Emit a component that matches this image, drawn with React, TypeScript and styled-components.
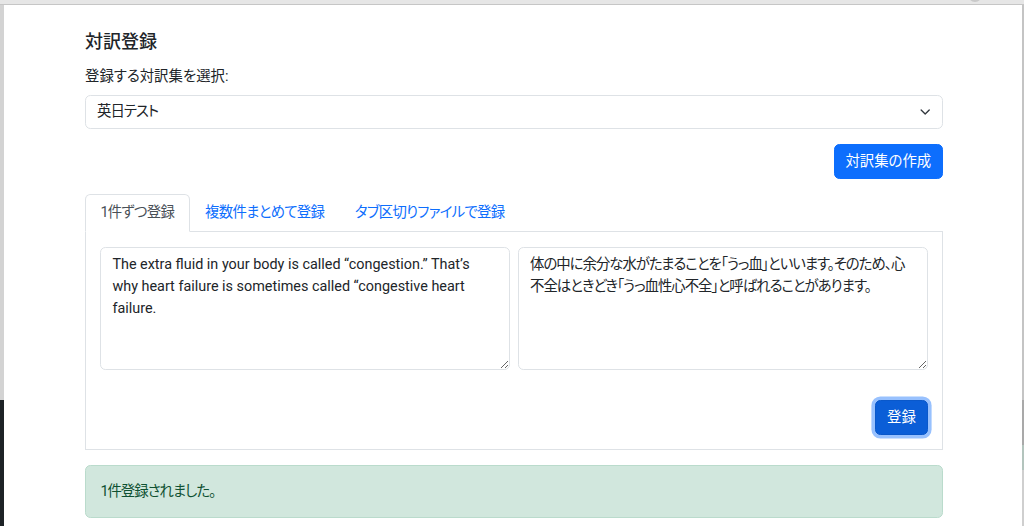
import React from "react";
import styled, { createGlobalStyle } from "styled-components";

const GlobalStyle = createGlobalStyle`
  html, body { margin: 0; padding: 0; background: #ffffff; }
  body {
    font-family: Roboto, "Noto Sans CJK JP", sans-serif;
    font-size: 14.4px;
    line-height: 1.5;
    color: #212529;
    font-feature-settings: "palt";
  }
  * { box-sizing: border-box; }
`;

const Frame = styled.div`
  width: 1024px;
  height: 526px;
  display: flex;
  flex-direction: column;
  overflow: hidden;
  background: #ffffff;
`;

const TopBar = styled.div`
  height: 5px;
  flex: none;
  background: #e6e6e6;
  border-bottom: 1px solid #c6c6c6;
  display: flex;
  justify-content: flex-end;
  padding-right: 42px;
`;

const TopKnob = styled.div`
  width: 14px;
  height: 14px;
  border-radius: 50%;
  background: #c9c9c9;
  transform: translateY(-12px);
`;

const BodyRow = styled.div`
  flex: 1;
  display: flex;
  min-height: 0;
`;

const SideStrip = styled.div<{ $w: number }>`
  width: ${(p) => p.$w}px;
  flex: none;
  display: flex;
  flex-direction: column;
`;

const StripPart = styled.div<{ $h?: number; $bg: string }>`
  ${(p) => (p.$h ? `height: ${p.$h}px; flex: none;` : "flex: 1;")}
  background: ${(p) => p.$bg};
`;

const Main = styled.main`
  flex: 1;
  padding: 26px 79px 0 81px;
  display: flex;
  flex-direction: column;
`;

const Heading = styled.h5`
  margin: 0 0 13px;
  font-size: 18px;
  line-height: 1.2;
  font-weight: 500;
`;

const Label = styled.label`
  display: block;
  margin-bottom: 7.4px;
  line-height: 21.6px;
`;

const SelectWrap = styled.div`
  position: relative;
`;

const Select = styled.select`
  display: block;
  width: 100%;
  appearance: none;
  font: inherit;
  font-feature-settings: "palt";
  letter-spacing: -1px;
  color: #212529;
  background: #fff;
  border: 1px solid #dee2e6;
  border-radius: 5.4px;
  padding: 5.4px 40px 5.4px 11px;
  line-height: 21.6px;
  height: 34.4px;
`;

const Chevron = styled.svg`
  position: absolute;
  right: 11px;
  top: 50%;
  width: 14.4px;
  height: 10.8px;
  transform: translateY(-50%);
  pointer-events: none;
`;

const ActionRow = styled.div`
  display: flex;
  justify-content: flex-end;
  margin-top: 15px;
`;

const Button = styled.button<{ $focused?: boolean }>`
  font: inherit;
  font-feature-settings: "palt";
  color: #fff;
  background: ${(p) => (p.$focused ? "#0b5ed7" : "#0d6efd")};
  border: 1px solid ${(p) => (p.$focused ? "#0a58ca" : "#0d6efd")};
  border-radius: 5.4px;
  padding: 5.4px 10.8px;
  line-height: 21.6px;
  height: ${(p) => (p.$focused ? "34.4px" : "35px")};
  box-shadow: ${(p) => (p.$focused ? "0 0 0 3.6px rgba(49,132,253,0.5)" : "none")};
  cursor: pointer;
`;

const Tabs = styled.ul`
  list-style: none;
  margin: 15px 0 0;
  padding: 0;
  display: flex;
  border-bottom: 1px solid #dee2e6;
`;

const Tab = styled.li<{ $active?: boolean }>`
  margin-bottom: -1px;
  padding: 7.2px 14.4px;
  line-height: 21.6px;
  letter-spacing: -0.7px;
  border: 1px solid ${(p) => (p.$active ? "#dee2e6" : "transparent")};
  border-bottom-color: ${(p) => (p.$active ? "#fff" : "transparent")};
  border-top-left-radius: 5.4px;
  border-top-right-radius: 5.4px;
  background: ${(p) => (p.$active ? "#fff" : "transparent")};
  color: ${(p) => (p.$active ? "#495057" : "#0d6efd")};
  cursor: pointer;
`;

const TabPanel = styled.section`
  border: 1px solid #dee2e6;
  border-top: none;
  padding: 15.5px 14.4px 14.4px;
  display: flex;
  flex-direction: column;
`;

const PairGrid = styled.div`
  display: grid;
  grid-template-columns: 1fr 1fr;
  gap: 8px;
`;

const TextArea = styled.textarea<{ $tight?: boolean }>`
  display: block;
  width: 100%;
  height: 123px;
  font: inherit;
  font-feature-settings: "palt";
  letter-spacing: ${(p) => (p.$tight ? "-1px" : "normal")};
  color: #212529;
  line-height: 22.2px;
  padding: 5.4px 11px;
  border: 1px solid #dee2e6;
  border-radius: 5.4px;
  resize: vertical;
  outline: none;
`;

const SubmitRow = styled.div`
  display: flex;
  justify-content: flex-end;
  margin-top: 30px;
`;

const Alert = styled.div`
  margin-top: 14.4px;
  padding: 15px 14.4px;
  line-height: 21.6px;
  letter-spacing: -1px;
  background: #d1e7dd;
  border: 1px solid #badbcc;
  border-radius: 5.4px;
  color: #0f5132;
`;

export default function App() {
  return (
    <>
      <GlobalStyle />
      <Frame>
        <TopBar>
          <TopKnob />
        </TopBar>
        <BodyRow>
          <SideStrip $w={4}>
            <StripPart $h={395} $bg="#d3d3d3" />
            <StripPart $bg="#1d2226" />
          </SideStrip>
          <Main>
            <Heading>対訳登録</Heading>
            <Label htmlFor="collection">登録する対訳集を選択:</Label>
            <SelectWrap>
              <Select id="collection" defaultValue="en-ja">
                <option value="en-ja">英日テスト</option>
              </Select>
              <Chevron viewBox="0 0 16 16" fill="none">
                <path
                  d="m2 5 6 6 6-6"
                  stroke="#343a40"
                  strokeWidth="2"
                  strokeLinecap="round"
                  strokeLinejoin="round"
                />
              </Chevron>
            </SelectWrap>
            <ActionRow>
              <Button>対訳集の作成</Button>
            </ActionRow>
            <Tabs>
              <Tab $active>1件ずつ登録</Tab>
              <Tab>複数件まとめて登録</Tab>
              <Tab>タブ区切りファイルで登録</Tab>
            </Tabs>
            <TabPanel>
              <PairGrid>
                <TextArea defaultValue="The extra fluid in your body is called “congestion.” That’s why heart failure is sometimes called “congestive heart failure." />
                <TextArea
                  $tight
                  defaultValue="体の中に余分な水がたまることを「うっ血」といいます。そのため、心不全はときどき「うっ血性心不全」と呼ばれることがあります。"
                />
              </PairGrid>
              <SubmitRow>
                <Button $focused>登録</Button>
              </SubmitRow>
            </TabPanel>
            <Alert>1件登録されました。</Alert>
          </Main>
          <SideStrip $w={2}>
            <StripPart $h={395} $bg="#c4c4c4" />
            <StripPart $h={45} $bg="#a9a9a9" />
            <StripPart $h={25} $bg="#b3c4bd" />
            <StripPart $bg="#cfcfcf" />
          </SideStrip>
        </BodyRow>
      </Frame>
    </>
  );
}
